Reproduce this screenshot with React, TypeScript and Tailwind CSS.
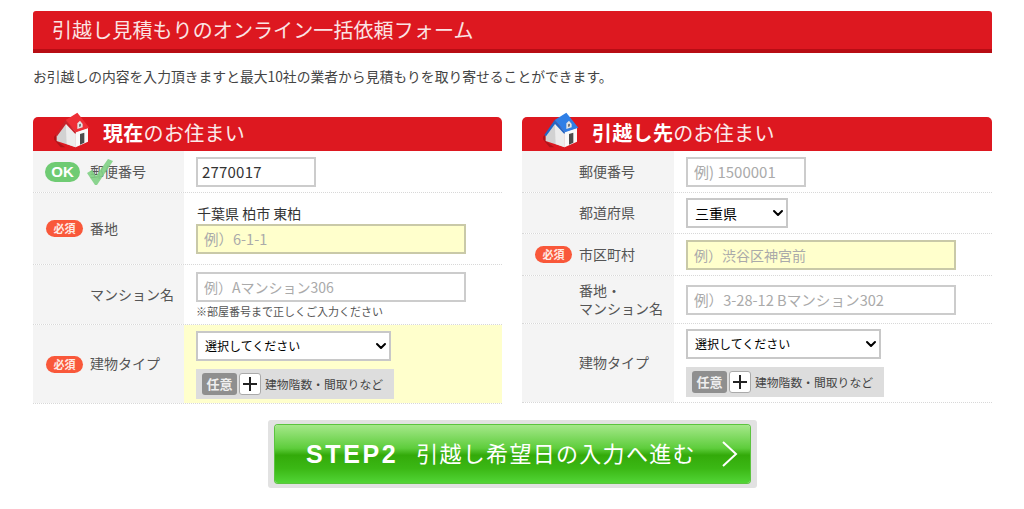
import type { ReactNode } from "react";
import { ChevronDown } from "lucide-react";

const House = ({ roof, roofDark }: { roof: string; roofDark: string }) => (
  <svg width="40" height="40" viewBox="0 0 120 120" className="shrink-0">
    <path d="M-4 84 L8 72 L8 93 L34 112 L20 112 Z" fill="#000" opacity="0.2" />
    <path d="M35 33 L8 75 L8 93 L65 112 L65 65 Z" fill="#d2d2d2" />
    <path d="M35 33 L65 65 L65 112 L38 102 Z" fill="#ececec" />
    <path d="M65 65 L102 53 L102 95 L65 112 Z" fill="#fafafa" />
    <path d="M35 30 L70 8 L106 53 L66 67 Z" fill={roof} />
    <path d="M35 30 L66 67 L64 72 L36 42 L9 79 L4 75 Z" fill={roofDark} />
    <path d="M70 40 L78 32 L86 42 L86 52 L70 57 Z" fill="#e4e4e4" />
    <path d="M75 43 L81 41 L81 49 L75 51 Z" fill="#777" />
    <path d="M78 72 L91 68 L91 98 L78 104 Z" fill="#4c4c4c" />
  </svg>
);

const Badge = () => (
  <span className="flex h-[17px] w-[37px] items-center justify-center rounded-full bg-[#f9583a] text-[11px] font-bold leading-none text-[#ffe9e2]">
    必須
  </span>
);

const OkBadge = () => (
  <span className="relative mr-[3px] flex h-5 w-[35px] items-center justify-center rounded-full bg-[#6fcb73] font-['Liberation_Sans',sans-serif] text-[15px] font-bold leading-none text-white">
    OK
    <svg width="26" height="26" viewBox="0 0 26 26" className="absolute left-[42px] top-[-3px] z-10">
      <path d="M0 14 L5 11 L9 17 L21 0 L26 2 L10 26 L8 26 Z" fill="#80d084" opacity="0.9" />
    </svg>
  </span>
);

const Row = ({
  label,
  badge,
  yellow,
  wide,
  height,
  children,
}: {
  label: ReactNode;
  badge?: ReactNode;
  yellow?: boolean;
  wide?: boolean;
  height: string;
  children: ReactNode;
}) => (
  <div className={`flex border-b border-dotted border-[#d8d8d8] ${height}`}>
    <div className={`flex shrink-0 items-center bg-[#f4f4f4] ${wide ? "w-[152px]" : "w-[151px]"}`}>
      <div className="flex w-[57px] shrink-0 justify-end pr-[7px]">{badge}</div>
      <div className="pb-[2px] text-sm leading-[18px] text-[#555]">{label}</div>
    </div>
    <div className={`flex flex-1 flex-col justify-center pl-[12px] ${yellow ? "bg-[#ffffcc] pt-[2px]" : ""}`}>{children}</div>
  </div>
);

const Field = ({
  width,
  placeholder,
  value,
  yellow,
  size = "text-sm",
}: {
  width: string;
  placeholder?: string;
  value?: string;
  yellow?: boolean;
  size?: string;
}) => (
  <input
    readOnly
    value={value}
    placeholder={placeholder}
    className={`h-[30px] shrink-0 border-2 px-[6px] text-[#333] outline-none placeholder:text-[#aaa] ${size} ${width} ${
      yellow ? "border-[#c9c9a8] bg-[#ffffcc]" : "border-[#cccccc] bg-white"
    }`}
  />
);

const Picker = ({ width, text, textSize }: { width: string; text: string; textSize: string }) => (
  <div className={`flex h-[30px] shrink-0 items-center justify-between border-2 border-[#c8c8c8] bg-white pl-[7px] text-black ${width} ${textSize}`}>
    <span>{text}</span>
    <ChevronDown size={16} strokeWidth={3} />
  </div>
);

const Optional = () => (
  <div className="mt-2 flex h-[30px] w-[198px] shrink-0 items-center bg-[#dddddd] pl-[6px]">
    <span className="flex h-[22px] w-[35px] items-center justify-center rounded-[3px] bg-[#8f8f8f] text-[13px] font-bold text-[#eee]">
      任意
    </span>
    <span className="ml-[2px] flex h-[22px] w-[22px] items-center justify-center rounded-[3px] border border-[#aaa] bg-white">
      <svg width="14" height="14" viewBox="0 0 14 14">
        <path d="M7 0 V14 M0 7 H14" stroke="#222" strokeWidth="2" />
      </svg>
    </span>
    <span className="ml-[4px] text-[11.8px] text-[#444]">建物階数・間取りなど</span>
  </div>
);

const PanelHead = ({ icon, strong, rest }: { icon: ReactNode; strong: string; rest: string }) => (
  <div className="relative h-[34px] rounded-t-[5px] bg-[#dd1820]">
    <div className="absolute left-[21px] top-[-7px]">{icon}</div>
    <div className="absolute left-[70px] top-0 text-xl leading-[32px] tracking-[0.3px] text-[#fbeaea]">
      <b className="font-bold text-white">{strong}</b>
      {rest}
    </div>
  </div>
);

const App = () => {
  return (
    <div className="ml-[33px] w-[959px] pt-[11px] font-['Noto_Sans_CJK_JP','Noto_Sans',sans-serif]">
      <div className="h-[42px] rounded-t-[3px] border-b-4 border-[#b80d14] bg-[#dd1820] pl-[19px] text-xl leading-[38px] tracking-[0.1px] text-[#fbe4e4]">
        引越し見積もりのオンライン一括依頼フォーム
      </div>
      <p className="mt-[14px] text-[13.8px] leading-[18px] text-[#444]">
        お引越しの内容を入力頂きますと最大10社の業者から見積もりを取り寄せることができます。
      </p>

      <div className="mt-[32px] grid grid-cols-[469px_470px] gap-x-[20px]">
        <section>
          <PanelHead icon={<House roof="#ee2f36" roofDark="#c9222a" />} strong="現在" rest="のお住まい" />
          <Row label="郵便番号" badge={<OkBadge />} height="h-[42px]">
            <Field width="w-[120px]" value="2770017" size="pl-[4px] text-[15px] tracking-[0.2px]" />
          </Row>
          <Row label="番地" badge={<Badge />} height="h-[72px]">
            <div className="pb-[2px] pl-[1px] text-sm leading-[18px] text-[#333]">千葉県 柏市 東柏</div>
            <Field width="w-[270px]" placeholder="例）6-1-1" yellow size="text-[14.5px]" />
          </Row>
          <Row label="マンション名" height="h-[60px]">
            <Field width="w-[270px]" placeholder="例）Aマンション306" />
            <div className="mt-[2px] text-[11px] leading-[14px] text-[#555]">※部屋番号まで正しくご入力ください</div>
          </Row>
          <Row label="建物タイプ" badge={<Badge />} yellow height="h-[79px]">
            <Picker width="w-[195px]" text="選択してください" textSize="text-xs" />
            <Optional />
          </Row>
        </section>

        <section>
          <PanelHead icon={<House roof="#2f7fe6" roofDark="#2366c4" />} strong="引越し先" rest="のお住まい" />
          <Row wide label="郵便番号" height="h-[42px]">
            <Field width="w-[120px]" placeholder="例) 1500001" size="text-[15px]" />
          </Row>
          <Row wide label="都道府県" height="h-[41px]">
            <Picker width="w-[102px]" text="三重県" textSize="text-sm" />
          </Row>
          <Row wide label="市区町村" badge={<Badge />} height="h-[42px]">
            <Field width="w-[270px]" placeholder="例）渋谷区神宮前" yellow />
          </Row>
          <Row wide label={<>番地・<br />マンション名</>} height="h-[48px]">
            <Field width="w-[270px]" placeholder="例）3-28-12 Bマンション302" size="text-[14.6px]" />
          </Row>
          <Row wide label="建物タイプ" height="h-[79px]">
            <Picker width="w-[195px]" text="選択してください" textSize="text-xs" />
            <Optional />
          </Row>
        </section>
      </div>

      <div className="mx-auto mt-4 w-[489px] rounded-[3px] bg-[#e2e2e2] px-[7px] py-[5px]">
        <div className="flex h-[58px] items-center rounded-[3px] bg-[linear-gradient(#a5e88a_0%,#5ecd3c_40%,#33aa0a_52%,#3bb815_75%,#52d536_100%)] pl-[31px] text-white shadow-[0_0_0_1px_#5cc43f]">
          <span className="pt-[2px] font-['Liberation_Sans',sans-serif] text-[25px] font-bold tracking-[2.6px]">STEP2</span>
          <span className="ml-[18px] pb-[4px] text-[22px] tracking-[1.3px]">引越し希望日の入力へ進む</span>
          <svg width="18" height="26" viewBox="0 0 18 26" className="ml-[25px]">
            <path d="M2 1 L15 13 L2 25" fill="none" stroke="#fff" strokeWidth="2" />
          </svg>
        </div>
      </div>
    </div>
  );
};

export default App;
